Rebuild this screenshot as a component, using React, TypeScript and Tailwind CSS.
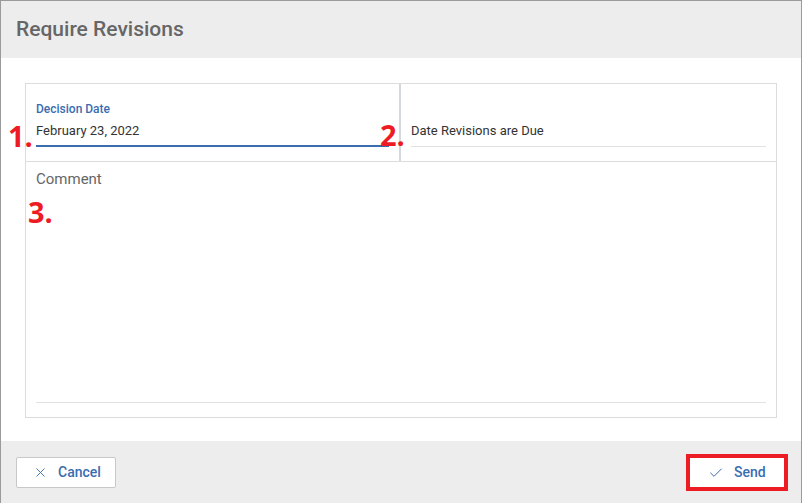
import { X, Check } from "lucide-react";

const BLUE = "text-[#3a6db0]";

function Marker({ n, className }: { n: string; className: string }) {
  return (
    <span
      className={`pointer-events-none absolute text-[29px] font-bold leading-none text-[#ed1c24] ${className}`}
      style={{ fontFamily: '"Open Sans", "Noto Sans", sans-serif' }}
    >
      {n}
    </span>
  );
}

export default function App() {
  return (
    <div
      className="relative flex h-[503px] w-[802px] flex-col border-x border-t border-[#9a9a9a] bg-white"
      style={{ fontFamily: 'Roboto, "Liberation Sans", sans-serif' }}
    >
      <header className="flex h-[57px] shrink-0 items-center bg-[#ededed] px-[15px]">
        <h1 className="text-[21px] font-medium text-[#666]">Require Revisions</h1>
      </header>

      <div className="flex-1 px-[24px] pt-[25px]">
        <div className="border border-[#dcdcdc]">
          <div className="grid grid-cols-2">
            <div className="border-r-2 border-[#d5d8dc] px-[10px] pb-[14px] pt-[17px]">
              <div className={`h-4 text-[12px] font-medium leading-4 ${BLUE}`}>Decision Date</div>
              <div className="mt-[6px] border-b-2 border-[#3a6db0] pb-[6px] text-[13px] leading-4 text-[#333]">
                February 23, 2022
              </div>
            </div>
            <div className="px-[10px] pb-[14px] pt-[17px]">
              <div className="h-4" />
              <div className="mt-[6px] border-b border-[#e2e2e2] pb-[7px] text-[13px] leading-4 text-[#333]">
                Date Revisions are Due
              </div>
            </div>
          </div>
          <div className="border-t border-[#dcdcdc] px-[10px] pb-[14px] pt-[8px]">
            <div className="h-[233px] border-b border-[#e2e2e2] text-[15px] leading-[18px] text-[#666]">
              Comment
            </div>
          </div>
        </div>
      </div>

      <footer className="flex h-[62px] shrink-0 items-start justify-between bg-[#ededed] pl-[15px] pr-[13px]">
        <button className={`mt-[16px] flex h-[31px] w-[100px] items-center gap-[10px] rounded-[2px] border border-[#c8c8c8] bg-white pl-[16px] text-[14px] font-medium ${BLUE}`}>
          <X size={15} strokeWidth={1.5} />
          Cancel
        </button>
        <button className={`mt-[13px] flex h-[37px] w-[102px] items-center gap-[10px] border-4 border-[#ed1c24] bg-white pl-[18px] text-[14px] font-medium ${BLUE}`}>
          <Check size={16} strokeWidth={1.5} />
          Send
        </button>
      </footer>

      <Marker n="1." className="left-[7px] top-[120px]" />
      <Marker n="2." className="left-[379px] top-[119px]" />
      <Marker n="3." className="left-[27px] top-[196px]" />
    </div>
  );
}
